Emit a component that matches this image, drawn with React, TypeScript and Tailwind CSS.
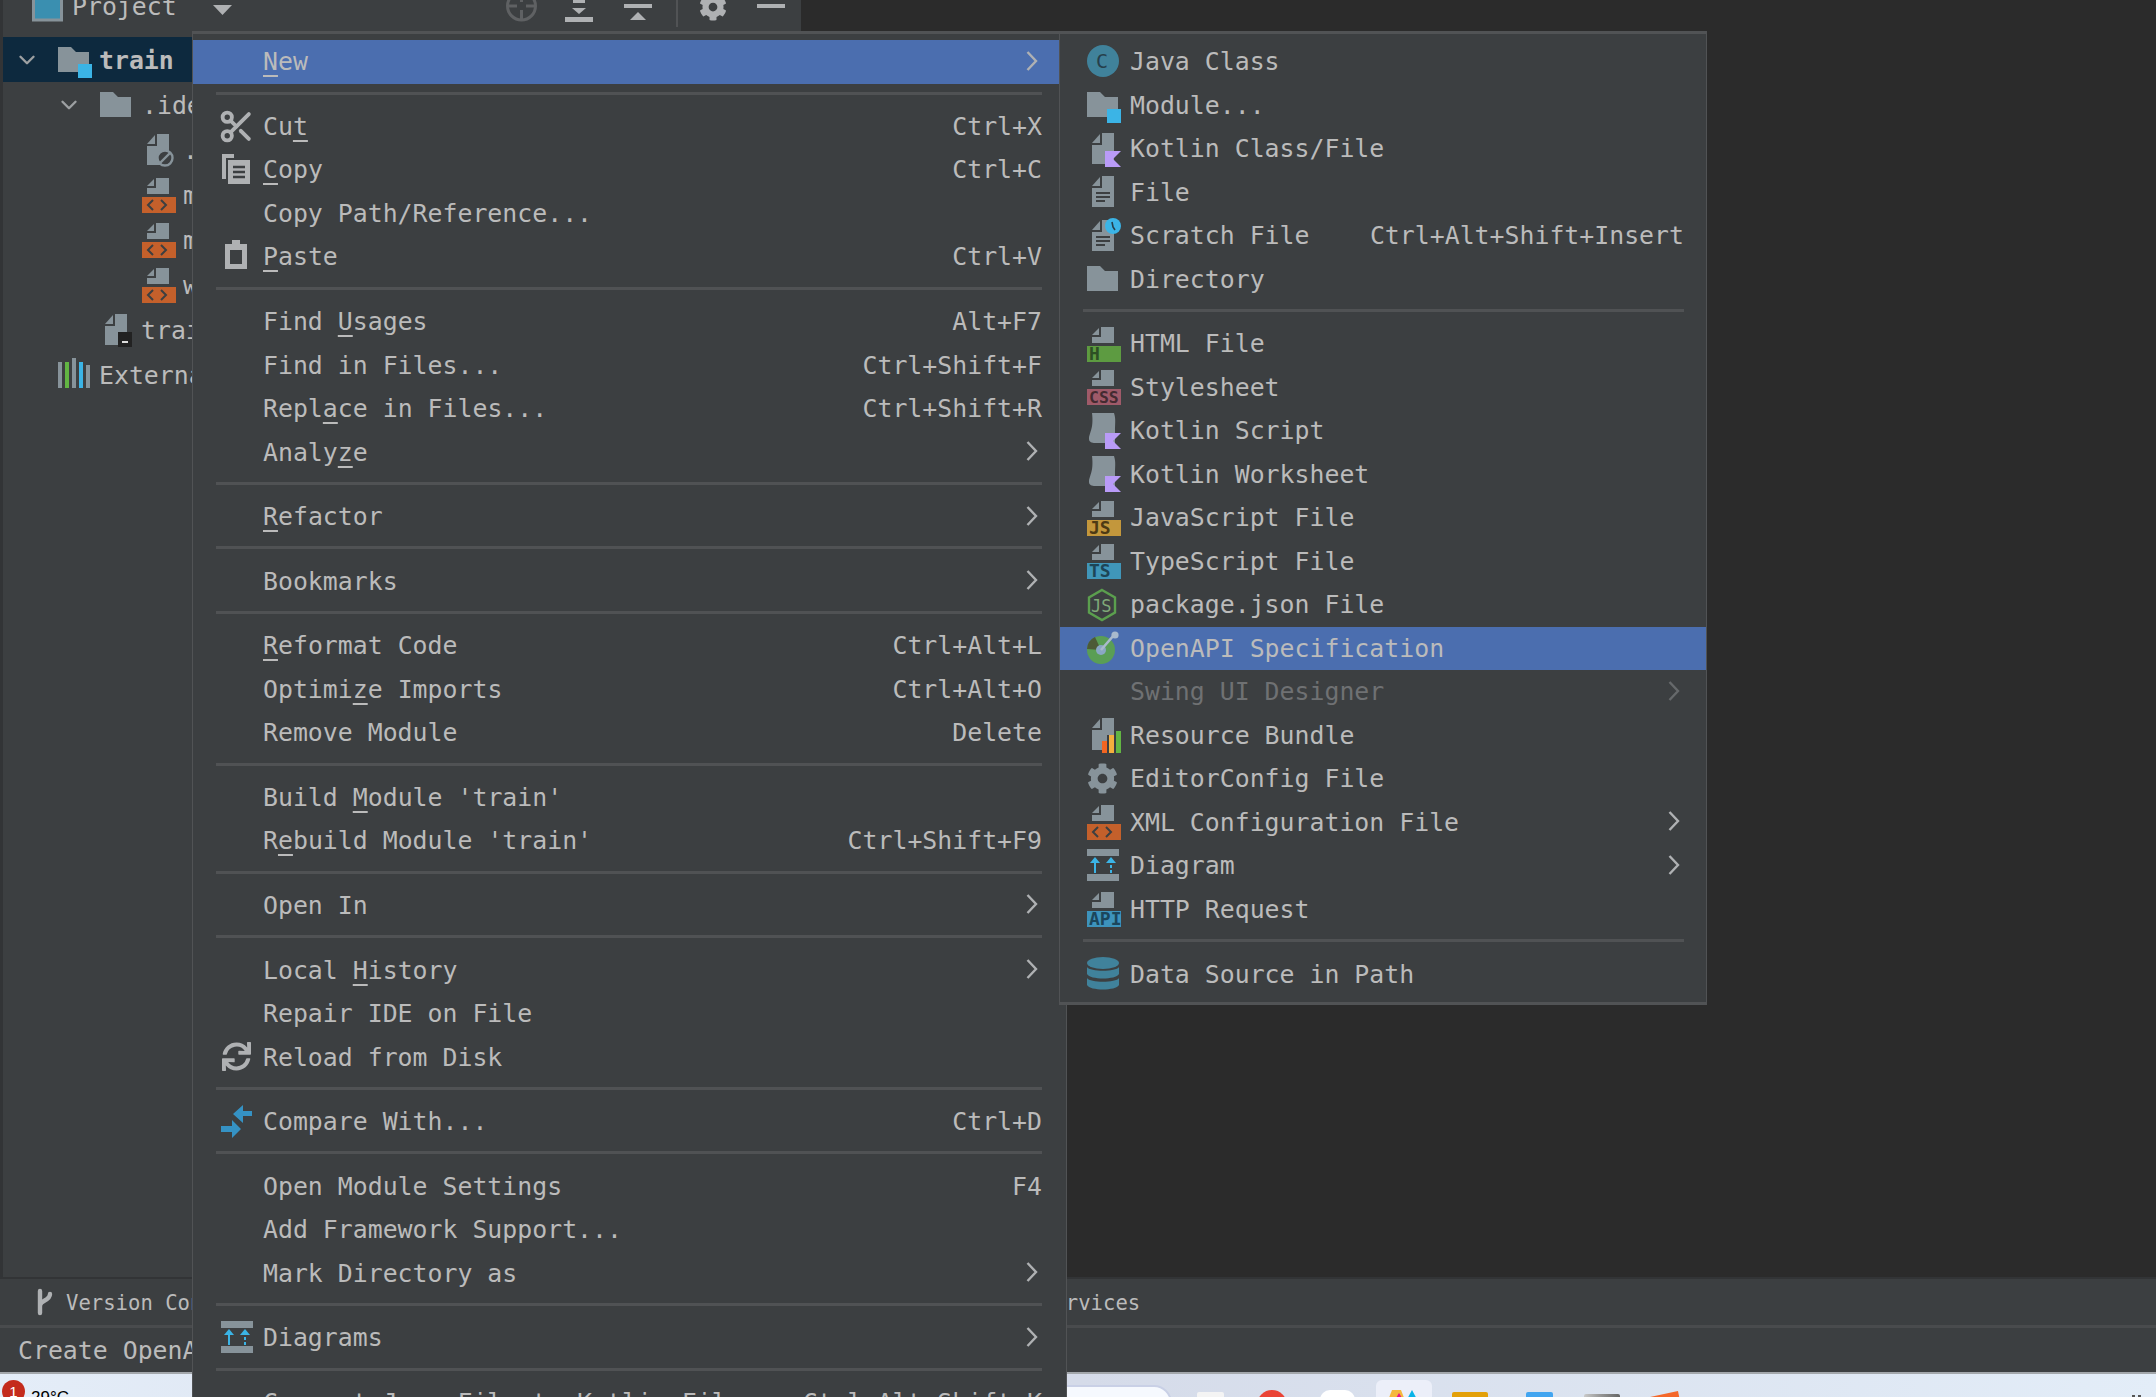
import { ReactNode } from "react";
import { Scissors, ChevronDown } from "lucide-react";
import { FaCog, FaSync } from "react-icons/fa";

const GRAY = "#87939a";
const BLUE = "#3bb4e6";
const LIGHT = "#afb1b3";
const BG = "#3c3f41";

function Ico({ children }: { children: ReactNode }) {
  return (
    <svg width="34" height="36" viewBox="0 0 34 36" className="shrink-0 block overflow-visible">
      {children}
    </svg>
  );
}

const FullPage = () => (
  <>
    <path d="M15 2H27V33H5V14H15Z" fill={GRAY} />
    <path d="M5 12L13 3V12Z" fill={GRAY} />
  </>
);

const TextLines = () => (
  <path d="M9 19H23M9 23H23M9 27H18" stroke={BG} strokeWidth="2" />
);

const KBadge = () => <path d="M18 20H34L26 28L34 36H18Z" fill="#b99bf8" />;

function Folder() {
  return <path d="M0 5H13L18 10H31V30H0Z" fill={GRAY} />;
}

function Band({ color, text, ink, size = 18 }: { color: string; text: string; ink: string; size?: number }) {
  return (
    <Ico>
      <path d="M14 1H27V17H5V11H14Z" fill={GRAY} />
      <path d="M5 9L12 2V9Z" fill={GRAY} />
      <rect x="0" y="20" width="34" height="16" fill={color} />
      <text x="2" y="34" fontSize={size} fontWeight="700" fontFamily="DejaVu Sans Mono, monospace" fill={ink}>
        {text}
      </text>
    </Ico>
  );
}

function XmlBand() {
  return (
    <Ico>
      <path d="M14 1H27V17H5V11H14Z" fill={GRAY} />
      <path d="M5 9L12 2V9Z" fill={GRAY} />
      <rect x="0" y="20" width="34" height="16" fill="#c4602b" />
      <path d="M11 23L6 28L11 33M19 23L24 28L19 33" stroke="#3c3f41" strokeWidth="2" fill="none" />
    </Ico>
  );
}

function Diagram() {
  return (
    <Ico>
      <rect x="0" y="1" width="32" height="7" fill={GRAY} />
      <rect x="0" y="26" width="32" height="7" fill={GRAY} />
      <path d="M8 25V13" stroke={BLUE} strokeWidth="2" />
      <path d="M3 15L8 9L13 15Z" fill={BLUE} />
      <path d="M24 25V14" stroke={BLUE} strokeWidth="2" strokeDasharray="3 2" />
      <path d="M19 15L24 9L29 15Z" fill={BLUE} />
    </Ico>
  );
}

function Script() {
  return (
    <Ico>
      <path d="M5 0H27C29 6 28 10 28 18V30H8C5 30 2 29 2 26C2 20 7 16 5 0Z" fill={GRAY} />
      <KBadge />
    </Ico>
  );
}

const icons: Record<string, ReactNode> = {
  java: (
    <Ico>
      <circle cx="16" cy="17" r="16" fill="#40829b" />
      <text x="9" y="24" fontSize="20" fontFamily="DejaVu Sans Mono, monospace" fill="#263f4b">C</text>
    </Ico>
  ),
  module: (
    <Ico>
      <Folder />
      <rect x="20" y="22" width="14" height="14" fill={BLUE} />
    </Ico>
  ),
  kotlinFile: (
    <Ico>
      <FullPage />
      <KBadge />
    </Ico>
  ),
  file: (
    <Ico>
      <FullPage />
      <TextLines />
    </Ico>
  ),
  scratch: (
    <Ico>
      <FullPage />
      <TextLines />
      <circle cx="26" cy="8" r="8" fill={BLUE} />
      <path d="M25 4L26 9L28 12" stroke="#263f4b" strokeWidth="1.6" fill="none" />
    </Ico>
  ),
  folder: <Ico><Folder /></Ico>,
  html: <Band color="#5d9b41" text="H" ink="#2d4f24" />,
  css: <Band color="#9f5a69" text="CSS" ink="#442b31" size={16.5} />,
  kts: <Script />,
  js: <Band color="#c3973c" text="JS" ink="#4d3a14" />,
  ts: <Band color="#4096b9" text="TS" ink="#1d4557" />,
  api: <Band color="#3d93bc" text="API" ink="#1b465c" size={18} />,
  node: (
    <Ico>
      <path d="M15 3L28 10.5V25.5L15 33L2 25.5V10.5Z" fill="none" stroke="#5b9f4e" strokeWidth="2.4" />
      <text x="4" y="25" fontSize="17" fontFamily="DejaVu Sans Mono, monospace" fill="#7fa878">JS</text>
    </Ico>
  ),
  openapi: (
    <Ico>
      <circle cx="14" cy="20" r="14" fill="#5a9e55" />
      <path d="M14 20L0 19A14 14 0 0 1 8 7Z" fill="#4d5a36" />
      <circle cx="14" cy="20" r="5" fill="#8aa7c4" />
      <path d="M14 20L27 5" stroke="#a9bacd" strokeWidth="2.6" />
      <circle cx="28" cy="5" r="3.6" fill="#a9bacd" />
    </Ico>
  ),
  bundle: (
    <Ico>
      <path d="M15 1H27V18H20V33H5V13H15Z" fill={GRAY} />
      <path d="M5 11L13 2V11Z" fill={GRAY} />
      <rect x="15" y="24" width="5" height="12" fill="#f26522" />
      <rect x="22" y="18" width="5" height="18" fill="#f4af3d" />
      <rect x="29" y="14" width="5" height="22" fill="#62b543" />
    </Ico>
  ),
  gear: (
    <Ico>
      <foreignObject x="0" y="2" width="32" height="32">
        <FaCog size={31} color={GRAY} />
      </foreignObject>
    </Ico>
  ),
  xml: <XmlBand />,
  diagram: <Diagram />,
  db: (
    <Ico>
      <ellipse cx="16" cy="7" rx="16" ry="6" fill="#40829b" />
      <path d="M0 11C3 16 29 16 32 11V18C29 24 3 24 0 18Z" fill="#40829b" />
      <path d="M0 22C3 27 29 27 32 22V29C29 35 3 35 0 29Z" fill="#40829b" />
    </Ico>
  ),
  cut: (
    <Ico>
      <g transform="translate(-3 0)">
        <Scissors size={37} color={LIGHT} strokeWidth={2.5} />
      </g>
    </Ico>
  ),
  copy: (
    <Ico>
      <path d="M1 2H13V6H5V27H1Z" fill={LIGHT} />
      <path d="M7 8H29V32H7Z" fill={LIGHT} />
      <path d="M12 15H24M12 20H24M12 25H24" stroke={BG} strokeWidth="2.4" />
    </Ico>
  ),
  paste: (
    <Ico>
      <path d="M4 5H11V1H19V5H26V30H4ZM9 11V25H21V11Z" fillRule="evenodd" fill={LIGHT} />
    </Ico>
  ),
  reload: (
    <Ico>
      <foreignObject x="1" y="3" width="30" height="30">
        <FaSync size={29} color={LIGHT} />
      </foreignObject>
    </Ico>
  ),
  compare: (
    <Ico>
      <path d="M12 10L22 1V7H31V12H22V19Z" fill="#3592c4" />
      <path d="M20 25L11 16V22H0V28H11V34Z" fill="#3592c4" />
    </Ico>
  ),
};

type Row =
  | "sep"
  | {
      label: string;
      u?: number;
      key?: string;
      icon?: string;
      arrow?: boolean;
      disabled?: boolean;
      active?: boolean;
    };

const mainMenu: Row[] = [
  { label: "New", u: 0, arrow: true, active: true },
  "sep",
  { label: "Cut", u: 2, key: "Ctrl+X", icon: "cut" },
  { label: "Copy", u: 0, key: "Ctrl+C", icon: "copy" },
  { label: "Copy Path/Reference..." },
  { label: "Paste", u: 0, key: "Ctrl+V", icon: "paste" },
  "sep",
  { label: "Find Usages", u: 5, key: "Alt+F7" },
  { label: "Find in Files...", key: "Ctrl+Shift+F" },
  { label: "Replace in Files...", u: 4, key: "Ctrl+Shift+R" },
  { label: "Analyze", u: 5, arrow: true },
  "sep",
  { label: "Refactor", u: 0, arrow: true },
  "sep",
  { label: "Bookmarks", arrow: true },
  "sep",
  { label: "Reformat Code", u: 0, key: "Ctrl+Alt+L" },
  { label: "Optimize Imports", u: 6, key: "Ctrl+Alt+O" },
  { label: "Remove Module", key: "Delete" },
  "sep",
  { label: "Build Module 'train'", u: 6 },
  { label: "Rebuild Module 'train'", u: 1, key: "Ctrl+Shift+F9" },
  "sep",
  { label: "Open In", arrow: true },
  "sep",
  { label: "Local History", u: 6, arrow: true },
  { label: "Repair IDE on File" },
  { label: "Reload from Disk", icon: "reload" },
  "sep",
  { label: "Compare With...", key: "Ctrl+D", icon: "compare" },
  "sep",
  { label: "Open Module Settings", key: "F4" },
  { label: "Add Framework Support..." },
  { label: "Mark Directory as", arrow: true },
  "sep",
  { label: "Diagrams", icon: "diagram", arrow: true },
  "sep",
  { label: "Convert Java File to Kotlin File", key: "Ctrl+Alt+Shift+K" },
];

const newMenu: Row[] = [
  { label: "Java Class", icon: "java" },
  { label: "Module...", icon: "module" },
  { label: "Kotlin Class/File", icon: "kotlinFile" },
  { label: "File", icon: "file" },
  { label: "Scratch File", key: "Ctrl+Alt+Shift+Insert", icon: "scratch" },
  { label: "Directory", icon: "folder" },
  "sep",
  { label: "HTML File", icon: "html" },
  { label: "Stylesheet", icon: "css" },
  { label: "Kotlin Script", icon: "kts" },
  { label: "Kotlin Worksheet", icon: "kts" },
  { label: "JavaScript File", icon: "js" },
  { label: "TypeScript File", icon: "ts" },
  { label: "package.json File", icon: "node" },
  { label: "OpenAPI Specification", icon: "openapi", active: true },
  { label: "Swing UI Designer", disabled: true, arrow: true },
  { label: "Resource Bundle", icon: "bundle" },
  { label: "EditorConfig File", icon: "gear" },
  { label: "XML Configuration File", icon: "xml", arrow: true },
  { label: "Diagram", icon: "diagram", arrow: true },
  { label: "HTTP Request", icon: "api" },
  "sep",
  { label: "Data Source in Path", icon: "db" },
];

function Label({ text, u }: { text: string; u?: number }) {
  if (u === undefined) return <span className="whitespace-pre mt-[2px]">{text}</span>;
  return (
    <span className="whitespace-pre mt-[2px]">
      {text.slice(0, u)}
      <span className="underline underline-offset-[5px] decoration-2">{text[u]}</span>
      {text.slice(u + 1)}
    </span>
  );
}

function Arrow({ dim }: { dim?: boolean }) {
  return (
    <svg width="12" height="20" viewBox="0 0 12 20" className="mr-[4px] mb-[2px] shrink-0">
      <path d="M1.5 1L10 10L1.5 19" fill="none" stroke={dim ? "#66696b" : LIGHT} strokeWidth="2.4" />
    </svg>
  );
}

function MenuRows({ rows, sepClass, padClass, slotClass }: { rows: Row[]; sepClass: string; padClass: string; slotClass: string }) {
  return (
    <>
      {rows.map((r, i) =>
        r === "sep" ? (
          <div key={i} className="h-[21.1px] flex items-center">
            <div className={`h-[3px] mb-[2px] bg-[#505254] ${sepClass}`} />
          </div>
        ) : (
          <div
            key={i}
            className={`h-[43.5px] flex items-center ${padClass} ${r.active ? "bg-[#4b6eaf]" : ""} ${r.disabled ? "text-[#6f7173]" : ""}`}
          >
            <div className={`shrink-0 ${slotClass}`}>{r.icon ? icons[r.icon] : null}</div>
            <Label text={r.label} u={r.u} />
            <div className="flex-1" />
            {r.key ? <span className="whitespace-pre mt-[2px]">{r.key}</span> : null}
            {r.arrow ? <Arrow dim={r.disabled} /> : null}
          </div>
        ),
      )}
    </>
  );
}

function TreeRow({ pad, chevron, icon, text, textX, bold, selected }: { pad: string; chevron?: boolean; icon: ReactNode; text: string; textX: string; bold?: boolean; selected?: boolean }) {
  return (
    <div className={`h-[45px] w-[190px] overflow-hidden flex items-center whitespace-pre ${pad} ${selected ? "bg-[#0d293e]" : ""} ${bold ? "font-bold" : ""}`}>
      {chevron ? <ChevronDown size={26} color="#9da0a2" strokeWidth={2.2} className="mr-[18px] shrink-0" /> : null}
      <div className={`shrink-0 ${textX}`}>{icon}</div>
      <span className="mt-[3px]">{text}</span>
    </div>
  );
}

export default function App() {
  return (
    <div className="relative w-[2156px] h-[1397px] overflow-hidden flex flex-col bg-[#2b2b2b] text-[#bbbbbb] text-[24.85px] leading-none font-['DejaVu_Sans_Mono',monospace]">
      {/* ide body */}
      <div className="h-[1277px] flex shrink-0">
        <div className="w-[801px] bg-[#3c3f41] border-l-[3px] border-[#323436]">
          {/* project toolbar */}
          <div className="h-[37px] flex items-start overflow-hidden pl-[29px]">
            <svg width="31" height="22" viewBox="0 0 31 22" className="shrink-0">
              <rect x="1.5" y="-4" width="28" height="24" fill="#3a8fb0" stroke={GRAY} strokeWidth="3" />
            </svg>
            <span className="ml-[9px] w-[104.5px] leading-[14px]">Project</span>
            <svg width="19" height="10" viewBox="0 0 19 10" className="ml-[36px] mt-[5px] shrink-0">
              <path d="M0 0H19L9.5 10Z" fill={LIGHT} />
            </svg>
            <svg width="31" height="22" viewBox="0 0 31 22" className="ml-[274px] shrink-0">
              <circle cx="15.5" cy="6" r="14" fill="none" stroke="#5f6163" strokeWidth="3" />
              <path d="M15.5 -8V2M15.5 10V20M2 6H11M20 6H29" stroke="#5f6163" strokeWidth="3" />
            </svg>
            <svg width="28" height="22" viewBox="0 0 28 22" className="ml-[28px] shrink-0">
              <path d="M8 0L14 -4L20 0V3H8ZM7 8H21L14 14Z" fill={LIGHT} />
              <rect x="0" y="17" width="28" height="5" fill={LIGHT} />
            </svg>
            <svg width="28" height="22" viewBox="0 0 28 22" className="ml-[31px] shrink-0">
              <rect x="0" y="4" width="28" height="4" fill={LIGHT} />
              <path d="M6 20L14 12L22 20Z" fill={LIGHT} />
            </svg>
            <div className="ml-[24px] w-[2px] h-[27px] bg-[#515355] shrink-0" />
            <FaCog size={28} color={LIGHT} className="ml-[21px] -mt-[7px] shrink-0" />
            <div className="ml-[30px] mt-[4px] w-[28px] h-[4px] bg-[#afb1b3] shrink-0" />
          </div>

          {/* project tree */}
          <TreeRow pad="pl-[11px]" chevron selected bold textX="mr-[7px]" text="train" icon={icons.module} />
          <TreeRow pad="pl-[53px]" chevron textX="mr-[8px]" text=".idea" icon={icons.folder} />
          <TreeRow
            pad="pl-[139px]"
            textX="mr-[7px]"
            text=".gitignore"
            icon={
              <Ico>
                <FullPage />
                <circle cx="23" cy="26" r="7.5" fill={BG} stroke={GRAY} strokeWidth="2.4" />
                <path d="M18 31L28 21" stroke={GRAY} strokeWidth="2.4" />
              </Ico>
            }
          />
          <TreeRow pad="pl-[139px]" textX="mr-[7px]" text="misc.xml" icon={icons.xml} />
          <TreeRow pad="pl-[139px]" textX="mr-[7px]" text="modules.xml" icon={icons.xml} />
          <TreeRow pad="pl-[139px]" textX="mr-[7px]" text="workspace.xml" icon={icons.xml} />
          <TreeRow
            pad="pl-[97px]"
            textX="mr-[7px]"
            text="train.iml"
            icon={
              <Ico>
                <FullPage />
                <rect x="18" y="20" width="14" height="15" fill="#222" />
                <rect x="22" y="29" width="6" height="2" fill="#ddd" />
              </Ico>
            }
          />
          <TreeRow
            pad="pl-[55px]"
            textX="mr-[7px]"
            text="External Libraries"
            icon={
              <Ico>
                <rect x="0" y="5" width="4" height="26" fill={GRAY} />
                <rect x="7" y="5" width="4" height="26" fill="#62b543" />
                <rect x="14" y="1" width="4" height="30" fill={GRAY} />
                <rect x="21" y="5" width="4" height="26" fill={BLUE} />
                <rect x="28" y="8" width="4" height="23" fill={GRAY} />
              </Ico>
            }
          />
        </div>
        <div className="flex-1 bg-[#2b2b2b]" />
      </div>

      {/* tool window strip */}
      <div className="h-[51px] shrink-0 bg-[#3c3f41] border-t-[2px] border-b-[3px] border-t-[#323436] border-b-[#494b4d] flex items-center text-[20.6px] whitespace-pre">
        <div className="w-[193px] overflow-hidden flex items-center shrink-0">
          <svg width="20" height="28" viewBox="0 0 20 28" className="ml-[35px] shrink-0">
            <path d="M5 3V25M5 18C5 12 15 13 15 6" fill="none" stroke={LIGHT} strokeWidth="4.4" strokeLinecap="round" />
          </svg>
          <span className="ml-[11px] mt-[2px]">Version Control</span>
        </div>
        <span className="ml-[848px] mt-[2px]">Services</span>
      </div>

      {/* status line */}
      <div className="h-[44px] shrink-0 bg-[#3c3f41] flex items-center pl-[18px] whitespace-pre">
        <div className="w-[175px] overflow-hidden mt-[2px]">Create OpenAPI Specification</div>
      </div>

      {/* windows taskbar */}
      <div className="flex-1 border-t-[2px] border-[#a3a7ab] bg-gradient-to-r from-[#e4edf8] via-[#d5dbe9] to-[#e3edf8] flex items-start text-black overflow-hidden font-['Liberation_Sans',sans-serif]">
        <div className="ml-[2px] mt-[6px] w-[23px] h-[23px] rounded-full bg-[#c42b1c] text-white text-[15px] flex items-center justify-center shrink-0">1</div>
        <span className="ml-[6px] mt-[15px] text-[17px]">29°C</span>
        <div className="ml-[790px] mt-[11px] w-[313px] h-[30px] rounded-t-[18px] bg-[#f6f9fe] border-2 border-[#c9d0e6] shrink-0" />
        <div className="ml-[25px] mt-[18px] w-[27px] h-[20px] bg-[#f4f4f4] rounded-t-[2px] shrink-0" />
        <div className="ml-[33px] mt-[16px] w-[30px] h-[30px] bg-[#ea4335] rounded-full shrink-0" />
        <div className="ml-[33px] mt-[16px] w-[35px] h-[30px] bg-white rounded-t-[10px] shrink-0" />
        <div className="ml-[21px] mt-[6px] w-[56px] h-[30px] bg-[#eceff9] rounded-t-[6px] flex justify-center pt-[9px] shrink-0">
          <svg width="34" height="14" viewBox="0 0 34 14">
            <path d="M0 14L5 1H14L19 14Z" fill="#f5b83d" />
            <path d="M6 14L12 4L18 14Z" fill="#e8168c" />
            <path d="M18 14L25 1L32 14Z" fill="#08b4e8" />
          </svg>
        </div>
        <div className="ml-[20px] mt-[18px] w-[36px] h-[20px] bg-[#e3a008] rounded-t-[2px] shrink-0" />
        <div className="ml-[38px] mt-[18px] w-[27px] h-[20px] bg-[#42a5f0] rounded-t-[2px] shrink-0" />
        <div className="ml-[31px] mt-[20px] w-[36px] h-[20px] rounded-t-[2px] bg-gradient-to-r from-[#c9c9c9] via-[#929292] to-[#666666] shrink-0" />
        <svg width="30" height="10" viewBox="0 0 30 10" className="ml-[30px] mt-[17px] shrink-0">
          <path d="M0 6L28 0L30 10H0Z" fill="#f4672a" />
        </svg>
        <div className="ml-[452px] mt-[21px] flex gap-[3px] shrink-0">
          <div className="w-[3px] h-[4px] bg-[#555]" />
          <div className="w-[3px] h-[4px] bg-[#555]" />
        </div>
      </div>

      {/* context menu */}
      <div className="absolute left-[192px] top-[31px] w-[875px] bg-[#3c3f41] border-x border-t-[3px] border-[#515355] pt-[6px]">
        <MenuRows rows={mainMenu} sepClass="ml-[23px] w-[826px]" padClass="pl-[28px] pr-[24px]" slotClass="w-[42px]" />
      </div>

      {/* new submenu */}
      <div className="absolute left-[1059px] top-[31px] w-[648px] bg-[#3c3f41] border-x border-y-[3px] border-[#515355] pt-[6px] pb-[6px]">
        <MenuRows rows={newMenu} sepClass="ml-[23px] w-[601px]" padClass="pl-[27px] pr-[22px]" slotClass="w-[43px]" />
      </div>
    </div>
  );
}
